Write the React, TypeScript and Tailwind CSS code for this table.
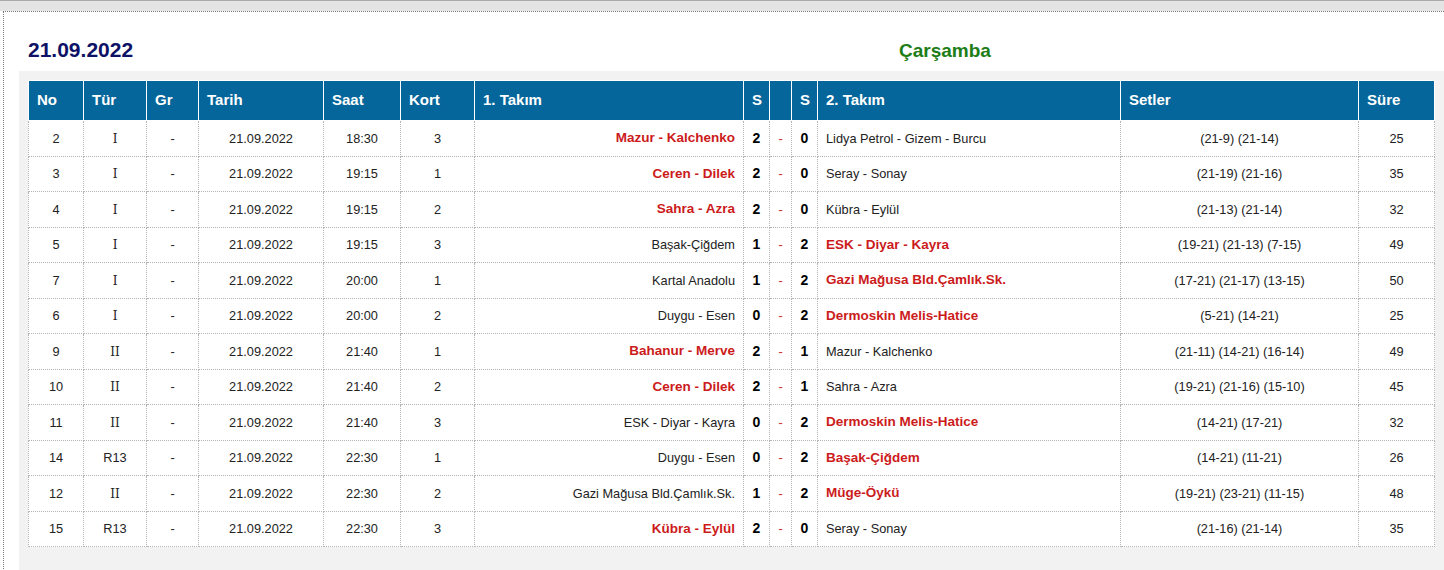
import React from 'react'

type Match = {
  no: string
  tur: string
  kort: string
  saat: string
  t1: string
  s1: number
  s2: number
  t2: string
  sets: string
  sure: string
}

const matches: Match[] = [
  { no: '2', tur: 'I', saat: '18:30', kort: '3', t1: 'Mazur - Kalchenko', s1: 2, s2: 0, t2: 'Lidya Petrol - Gizem - Burcu', sets: '(21-9) (21-14)', sure: '25' },
  { no: '3', tur: 'I', saat: '19:15', kort: '1', t1: 'Ceren - Dilek', s1: 2, s2: 0, t2: 'Seray - Sonay', sets: '(21-19) (21-16)', sure: '35' },
  { no: '4', tur: 'I', saat: '19:15', kort: '2', t1: 'Sahra - Azra', s1: 2, s2: 0, t2: 'Kübra - Eylül', sets: '(21-13) (21-14)', sure: '32' },
  { no: '5', tur: 'I', saat: '19:15', kort: '3', t1: 'Başak-Çiğdem', s1: 1, s2: 2, t2: 'ESK - Diyar - Kayra', sets: '(19-21) (21-13) (7-15)', sure: '49' },
  { no: '7', tur: 'I', saat: '20:00', kort: '1', t1: 'Kartal Anadolu', s1: 1, s2: 2, t2: 'Gazi Mağusa Bld.Çamlık.Sk.', sets: '(17-21) (21-17) (13-15)', sure: '50' },
  { no: '6', tur: 'I', saat: '20:00', kort: '2', t1: 'Duygu - Esen', s1: 0, s2: 2, t2: 'Dermoskin Melis-Hatice', sets: '(5-21) (14-21)', sure: '25' },
  { no: '9', tur: 'II', saat: '21:40', kort: '1', t1: 'Bahanur - Merve', s1: 2, s2: 1, t2: 'Mazur - Kalchenko', sets: '(21-11) (14-21) (16-14)', sure: '49' },
  { no: '10', tur: 'II', saat: '21:40', kort: '2', t1: 'Ceren - Dilek', s1: 2, s2: 1, t2: 'Sahra - Azra', sets: '(19-21) (21-16) (15-10)', sure: '45' },
  { no: '11', tur: 'II', saat: '21:40', kort: '3', t1: 'ESK - Diyar - Kayra', s1: 0, s2: 2, t2: 'Dermoskin Melis-Hatice', sets: '(14-21) (17-21)', sure: '32' },
  { no: '14', tur: 'R13', saat: '22:30', kort: '1', t1: 'Duygu - Esen', s1: 0, s2: 2, t2: 'Başak-Çiğdem', sets: '(14-21) (11-21)', sure: '26' },
  { no: '12', tur: 'II', saat: '22:30', kort: '2', t1: 'Gazi Mağusa Bld.Çamlık.Sk.', s1: 1, s2: 2, t2: 'Müge-Öykü', sets: '(19-21) (23-21) (11-15)', sure: '48' },
  { no: '15', tur: 'R13', saat: '22:30', kort: '3', t1: 'Kübra - Eylül', s1: 2, s2: 0, t2: 'Seray - Sonay', sets: '(21-16) (21-14)', sure: '35' },
]

const th = 'border border-white text-left pl-2 font-bold text-[15px] text-white'
const td = 'border border-dotted border-[#b4b4b4] text-[12.75px] text-[#222]'
const win = 'font-bold text-[13.5px] text-[#cc1b1b]'

export default function App() {
  return (
    <div className="min-h-[570px] overflow-hidden bg-white font-['Liberation_Sans',Arial,sans-serif]">
      <div className="h-[11px] border-t border-[#a9a9a9] bg-[#e4e4e4]" />
      <div className="ml-[3px] border-l border-t border-dotted border-[#7a7a7a]">
        <div className="flex h-[59px] items-baseline pt-[26px] pl-[24px]">
          <div className="w-[761px] text-[21px] leading-[24px] font-bold text-[#0e1266]">21.09.2022</div>
          <div className="w-[312px] text-center text-[19px] leading-[24px] font-bold text-[#1d7d16]">Çarşamba</div>
        </div>
        <div className="ml-[15px] bg-[#f2f2f2] pt-[9px] pl-[9px] pb-[40px]">
          <table className="w-[1407px] table-fixed border-collapse bg-white">
            <colgroup>
              <col className="w-[55px]" />
              <col className="w-[63px]" />
              <col className="w-[52px]" />
              <col className="w-[125px]" />
              <col className="w-[77px]" />
              <col className="w-[74px]" />
              <col className="w-[269px]" />
              <col className="w-[26px]" />
              <col className="w-[22px]" />
              <col className="w-[26px]" />
              <col className="w-[303px]" />
              <col className="w-[238px]" />
              <col className="w-[76px]" />
            </colgroup>
            <thead>
              <tr className="h-[40px] bg-[#05669b]">
                <th className={th}>No</th>
                <th className={th}>Tür</th>
                <th className={th}>Gr</th>
                <th className={th}>Tarih</th>
                <th className={th}>Saat</th>
                <th className={th}>Kort</th>
                <th className={th}>1. Takım</th>
                <th className={th}>S</th>
                <th className={th}></th>
                <th className={th}>S</th>
                <th className={th}>2. Takım</th>
                <th className={th}>Setler</th>
                <th className={th}>Süre</th>
              </tr>
            </thead>
            <tbody>
              {matches.map((m) => {
                const firstWins = m.s1 > m.s2
                return (
                  <tr key={m.no} className="h-[35.5px]">
                    <td className={`${td} text-center`}>{m.no}</td>
                    <td className={`${td} text-center`}>
                      {m.tur === 'R13' ? m.tur : <span className="font-['DejaVu_Serif',serif] text-[12px]">{m.tur}</span>}
                    </td>
                    <td className={`${td} text-center`}>-</td>
                    <td className={`${td} text-center`}>21.09.2022</td>
                    <td className={`${td} text-center`}>{m.saat}</td>
                    <td className={`${td} text-center`}>{m.kort}</td>
                    <td className={`${td} text-right pr-2`}>
                      {firstWins ? <span className={win}>{m.t1}</span> : m.t1}
                    </td>
                    <td className={`${td} text-center font-bold text-[14px] text-black`}>{m.s1}</td>
                    <td className={`${td} text-center text-[#d42a2a]`}>-</td>
                    <td className={`${td} text-center font-bold text-[14px] text-black`}>{m.s2}</td>
                    <td className={`${td} text-left pl-2`}>
                      {firstWins ? m.t2 : <span className={win}>{m.t2}</span>}
                    </td>
                    <td className={`${td} text-center`}>{m.sets}</td>
                    <td className={`${td} text-center text-[#1b1b62]`}>{m.sure}</td>
                  </tr>
                )
              })}
            </tbody>
          </table>
        </div>
      </div>
    </div>
  )
}
